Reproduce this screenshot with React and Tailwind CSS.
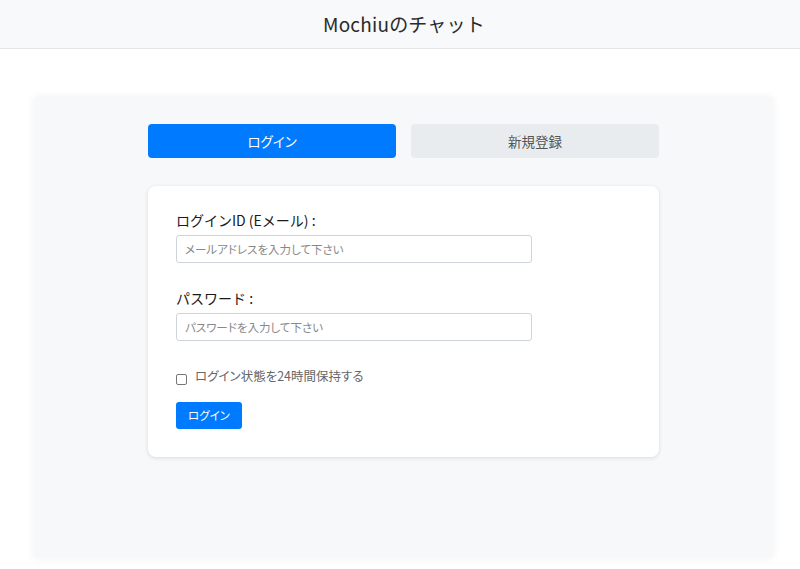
import { useState } from 'react';

export default function App() {
  const [tab, setTab] = useState('login');
  const [email, setEmail] = useState('');
  const [password, setPassword] = useState('');
  const [keep, setKeep] = useState(false);

  return (
    <div className="min-h-screen bg-white text-[#212529] font-['Noto_Sans_CJK_JP','Noto_Sans',sans-serif]">
      <header className="h-[49px] bg-[#f8f9fa] border-b border-[#e3e5e8] flex items-center justify-center">
        <h1 className="text-[19px] font-normal text-[#2b2b2b] tracking-[0.2px] pl-[8px]">Mochiuのチャット</h1>
      </header>

      <main className="px-[34px] pt-[48px] pb-[12px]">
        <div className="w-[739px] h-[461px] bg-[#f7f8fa] rounded-[3px] shadow-[0_0_10px_rgba(0,0,0,0.06)] pt-[27px]">
          <div className="w-[511px] mx-auto">
            <div className="flex gap-[15px]">
              <button
                onClick={() => setTab('login')}
                className={`w-[248px] h-[34px] rounded-[4px] text-[13.5px] [font-feature-settings:'palt'] ${tab === 'login' ? 'bg-[#007bff] text-white' : 'bg-[#e9ecef] text-[#555]'}`}
              >
                ログイン
              </button>
              <button
                onClick={() => setTab('register')}
                className={`w-[248px] h-[34px] rounded-[4px] text-[13.5px] [font-feature-settings:'palt'] ${tab === 'register' ? 'bg-[#007bff] text-white' : 'bg-[#e9ecef] text-[#555]'}`}
              >
                新規登録
              </button>
            </div>

            <form
              onSubmit={(e) => e.preventDefault()}
              className="mt-[28px] bg-white rounded-[8px] shadow-[0_1px_4px_rgba(0,0,0,0.12)] px-[28px] pt-[24px] pb-[28px]"
            >
              <label className="block text-[14px] leading-[20px] text-[#1a1a1a]">ログインID (Eメール) :</label>
              <input
                type="email"
                value={email}
                onChange={(e) => setEmail(e.target.value)}
                placeholder="メールアドレスを入力して下さい"
                className="mt-[5px] w-[356px] h-[28px] border border-[#ced4da] rounded-[3px] px-[8px] text-[11.5px] [font-feature-settings:'palt'] placeholder:text-[#888] outline-none"
              />

              <label className="block mt-[25px] text-[14px] leading-[20px] text-[#1a1a1a]">パスワード :</label>
              <input
                type="password"
                value={password}
                onChange={(e) => setPassword(e.target.value)}
                placeholder="パスワードを入力して下さい"
                className="mt-[5px] w-[356px] h-[28px] border border-[#ced4da] rounded-[3px] px-[8px] text-[11.5px] [font-feature-settings:'palt'] placeholder:text-[#888] outline-none"
              />

              <label className="mt-[25px] flex items-start gap-[8px] cursor-pointer">
                <input
                  type="checkbox"
                  checked={keep}
                  onChange={(e) => setKeep(e.target.checked)}
                  className="appearance-none mt-[8px] w-[11px] h-[11px] border border-[#767676] rounded-[2px] checked:bg-[#007bff]"
                />
                <span className="text-[12.5px] leading-[20px] text-[#666] [font-feature-settings:'palt']">ログイン状態を24時間保持する</span>
              </label>

              <button
                type="submit"
                className="mt-[16px] w-[66px] h-[27px] bg-[#007bff] text-white text-[11.5px] rounded-[3px] [font-feature-settings:'palt']"
              >
                ログイン
              </button>
            </form>
          </div>
        </div>
      </main>
    </div>
  );
}
